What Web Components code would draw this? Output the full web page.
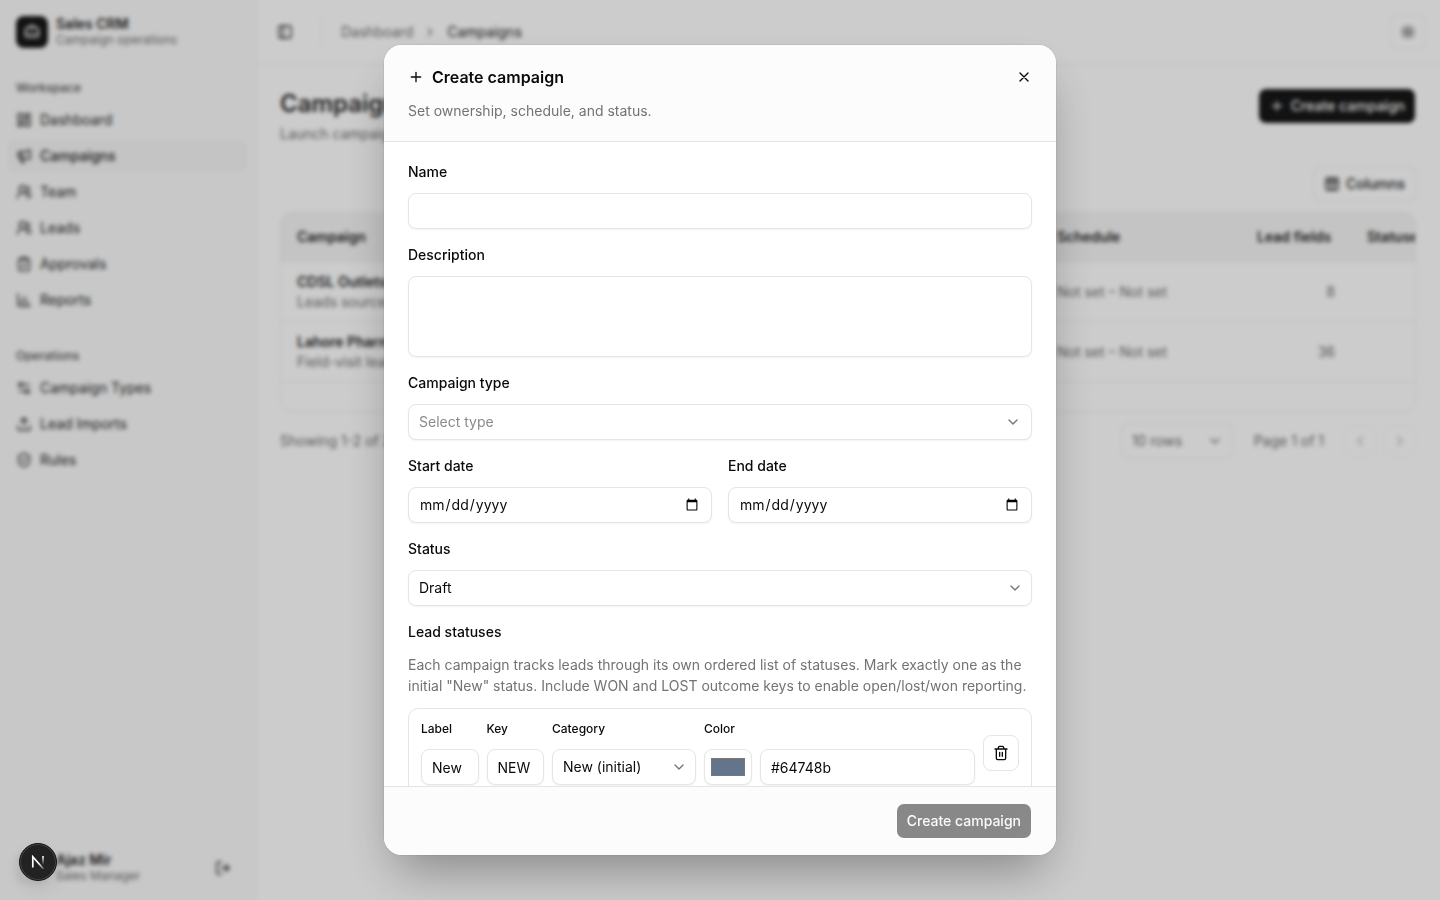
<!DOCTYPE html>
<html lang="en">
<head>
<meta charset="utf-8">
<meta name="viewport" content="width=device-width, initial-scale=1">
<title>Campaigns - Sales CRM</title>
<style>
	html, body { height: 100%; }
	body {
		margin: 0;
		overflow: hidden;
		font: 14px/20px Inter, "Liberation Sans", sans-serif;
		color: #0a0a0a;
		background: #ffffff;
		--muted: #737373;
		--line: #e5e5e5;
		--surface: #fafafa;
		--accent: #f5f5f5;
		--primary: #171717;
	}
	crm-shell { --line: #f0f0f0; color: #262626; }
</style>
</head>
<body>

<crm-shell>
	<crm-sidebar slot="sidebar">
		<crm-nav-group label="Workspace">
			<crm-nav-item icon="dashboard">Dashboard</crm-nav-item>
			<crm-nav-item icon="megaphone" active>Campaigns</crm-nav-item>
			<crm-nav-item icon="users">Team</crm-nav-item>
			<crm-nav-item icon="users">Leads</crm-nav-item>
			<crm-nav-item icon="clipboard">Approvals</crm-nav-item>
			<crm-nav-item icon="chart">Reports</crm-nav-item>
		</crm-nav-group>
		<crm-nav-group label="Operations">
			<crm-nav-item icon="settings">Campaign Types</crm-nav-item>
			<crm-nav-item icon="upload">Lead Imports</crm-nav-item>
			<crm-nav-item icon="shield">Rules</crm-nav-item>
		</crm-nav-group>
	</crm-sidebar>
	<crm-topbar></crm-topbar>
	<crm-campaigns></crm-campaigns>
</crm-shell>

<crm-dialog heading="Create campaign" description="Set ownership, schedule, and status.">
	<crm-field label="Name"></crm-field>
	<crm-field label="Description" type="textarea"></crm-field>
	<crm-field label="Campaign type" type="select" placeholder="Select type"></crm-field>
	<crm-columns>
		<crm-field label="Start date" type="date"></crm-field>
		<crm-field label="End date" type="date"></crm-field>
	</crm-columns>
	<crm-field label="Status" type="select" value="Draft"></crm-field>
	<crm-lead-statuses></crm-lead-statuses>
	<crm-button slot="footer" disabled>Create campaign</crm-button>
</crm-dialog>

<dev-badge></dev-badge>

<script>
// 24x24 stroke icons
const ICONS = {
	plus: '<path d="M5 12h14M12 5v14"/>',
	close: '<path d="M18 6 6 18M6 6l12 12"/>',
	down: '<path d="m6 9 6 6 6-6"/>',
	left: '<path d="m15 18-6-6 6-6"/>',
	right: '<path d="m9 18 6-6-6-6"/>',
	trash: '<path d="M3 6h18M19 6v14a2 2 0 0 1-2 2H7a2 2 0 0 1-2-2V6M8 6V4a2 2 0 0 1 2-2h4a2 2 0 0 1 2 2v2M10 11v6M14 11v6"/>',
	briefcase: '<path d="M12 12h.01M16 6V4a2 2 0 0 0-2-2h-4a2 2 0 0 0-2 2v2M22 13a18.15 18.15 0 0 1-20 0"/><rect width="20" height="14" x="2" y="6" rx="2"/>',
	panel: '<rect width="18" height="18" x="3" y="3" rx="2"/><path d="M9 3v18"/>',
	sun: '<circle cx="12" cy="12" r="4"/><path d="M12 2v2M12 20v2M4.93 4.93l1.41 1.41M17.66 17.66l1.41 1.41M2 12h2M20 12h2M6.34 17.66l-1.41 1.41M19.07 4.93l-1.41 1.41"/>',
	columns: '<rect width="18" height="18" x="3" y="3" rx="2"/><path d="M3 9h18M9 3v18M15 3v18"/>',
	dashboard: '<rect width="7" height="9" x="3" y="3" rx="1"/><rect width="7" height="5" x="14" y="3" rx="1"/><rect width="7" height="9" x="14" y="12" rx="1"/><rect width="7" height="5" x="3" y="16" rx="1"/>',
	megaphone: '<path d="M11 6a13 13 0 0 0 8.4-2.8A1 1 0 0 1 21 4v12a1 1 0 0 1-1.6.8A13 13 0 0 0 11 14H5a2 2 0 0 1-2-2V8a2 2 0 0 1 2-2zM6 14a12 12 0 0 0 2.4 7.2 2 2 0 0 0 3.2-2.4A8 8 0 0 1 10 14M8 6v8"/>',
	users: '<path d="M18 21a8 8 0 0 0-16 0"/><circle cx="10" cy="8" r="5"/><path d="M22 20c0-3.37-2-6.5-4-8a5 5 0 0 0-.45-8.3"/>',
	clipboard: '<rect width="8" height="4" x="8" y="2" rx="1"/><path d="M16 4h2a2 2 0 0 1 2 2v14a2 2 0 0 1-2 2H6a2 2 0 0 1-2-2V6a2 2 0 0 1 2-2h2M9 14l2 2 4-4"/>',
	chart: '<path d="M3 3v16a2 2 0 0 0 2 2h16M18 17v-3M13 17V7M8 17v-5"/>',
	settings: '<path d="M20 7h-9M14 17H5"/><circle cx="17" cy="17" r="3"/><circle cx="7" cy="7" r="3"/>',
	upload: '<path d="M12 3v12M17 8l-5-5-5 5M21 15v4a2 2 0 0 1-2 2H5a2 2 0 0 1-2-2v-4"/>',
	shield: '<path d="M20 13c0 5-3.5 7.5-7.66 8.95a1 1 0 0 1-.67-.01C7.5 20.5 4 18 4 13V6a1 1 0 0 1 1-1c2 0 4.5-1.2 6.24-2.72a1.17 1.17 0 0 1 1.52 0C14.51 3.81 17 5 19 5a1 1 0 0 1 1 1zM9 12l2 2 4-4"/>',
	logout: '<path d="M9 21H5a2 2 0 0 1-2-2V5a2 2 0 0 1 2-2h4M16 17l5-5-5-5M21 12H9"/>'
};

// Base: every element renders once into an open shadow root
class CrmElement extends HTMLElement {
	constructor() {
		super();
		this.attachShadow({ mode: 'open' });
	}

	connectedCallback() {
		this.shadowRoot.innerHTML = this.render();
	}

	attr(name) { return this.getAttribute(name) || ''; }
}

class CrmIcon extends CrmElement {
	render() {
		return `
			<style>
				:host { display: block; flex: none; width: 16px; height: 16px; }
				svg { display: block; width: 100%; height: 100%; }
			</style>
			<svg viewBox="0 0 24 24" fill="none" stroke="currentColor" stroke-width="2" stroke-linecap="round" stroke-linejoin="round" aria-hidden="true">${ICONS[this.attr('name')]}</svg>
		`;
	}
}
customElements.define('crm-icon', CrmIcon);

class CrmButton extends CrmElement {
	render() {
		const icon = this.attr('icon');
		const label = this.attr('label');
		return `
			<style>
				:host { display: block; flex: none; }
				button {
					display: flex;
					align-items: center;
					justify-content: center;
					gap: 6px;
					box-sizing: border-box;
					min-width: 36px;
					height: 36px;
					padding: 0 10px;
					border: 1px solid transparent;
					border-radius: 8px;
					font: inherit;
					font-weight: 500;
					color: #fafafa;
					background: var(--primary);
					background-clip: padding-box;
					cursor: pointer;
				}
				button:disabled { opacity: 0.5; cursor: default; }
				:host([variant="outline"]) button {
					color: inherit;
					background: #ffffff;
					border-color: var(--line);
				}
				:host([variant="ghost"]) button { color: inherit; background: none; }
				:host([label]) button { padding: 0; }
				:host([size="small"]) button { min-width: 32px; height: 32px; }
			</style>
			<button type="button" ${label ? `aria-label="${label}"` : ''} ${this.hasAttribute('disabled') ? 'disabled' : ''}>
				${icon ? `<crm-icon name="${icon}"></crm-icon>` : ''}${label ? '' : '<slot></slot>'}
			</button>
		`;
	}
}
customElements.define('crm-button', CrmButton);

class CrmShell extends CrmElement {
	render() {
		return `
			<style>
				:host { display: grid; grid-template-columns: 256px minmax(0, 1fr); min-height: 100vh; }
				main { min-width: 0; }
			</style>
			<slot name="sidebar"></slot>
			<main><slot></slot></main>
		`;
	}
}
customElements.define('crm-shell', CrmShell);

class CrmSidebar extends CrmElement {
	render() {
		return `
			<style>
				:host {
					display: flex;
					flex-direction: column;
					box-sizing: border-box;
					background: var(--surface);
					border-right: 1px solid var(--line);
				}
				header, footer { display: flex; align-items: center; gap: 8px; padding: 16px; }
				.logo {
					display: grid;
					place-items: center;
					width: 32px;
					height: 32px;
					border-radius: 8px;
					color: #fafafa;
					background: var(--primary);
				}
				.text { flex: 1; line-height: 16px; }
				strong { display: block; font-weight: 600; }
				small { display: block; font-size: 12px; color: var(--muted); }
				nav { flex: 1; }
				.avatar { width: 32px; height: 32px; border-radius: 8px; background: var(--line); }
			</style>
			<header>
				<div class="logo"><crm-icon name="briefcase"></crm-icon></div>
				<div class="text"><strong>Sales CRM</strong><small>Campaign operations</small></div>
			</header>
			<nav><slot></slot></nav>
			<footer>
				<div class="avatar"></div>
				<div class="text"><strong>Ajaz Mir</strong><small>Sales Manager</small></div>
				<crm-button variant="ghost" size="small" icon="logout" label="Log out"></crm-button>
			</footer>
		`;
	}
}
customElements.define('crm-sidebar', CrmSidebar);

class CrmNavGroup extends CrmElement {
	render() {
		return `
			<style>
				:host { display: block; padding: 8px; margin-bottom: 8px; }
				h2 {
					margin: 0;
					padding: 0 8px;
					font-size: 12px;
					line-height: 32px;
					font-weight: 500;
					color: #525252;
				}
				.items { display: flex; flex-direction: column; gap: 4px; }
			</style>
			<h2>${this.attr('label')}</h2>
			<div class="items"><slot></slot></div>
		`;
	}
}
customElements.define('crm-nav-group', CrmNavGroup);

class CrmNavItem extends CrmElement {
	render() {
		return `
			<style>
				:host { display: block; }
				a {
					display: flex;
					align-items: center;
					gap: 8px;
					height: 32px;
					padding: 0 8px;
					border-radius: 8px;
					color: inherit;
					text-decoration: none;
				}
				:host([active]) a { font-weight: 500; background: var(--accent); }
			</style>
			<a href="#"><crm-icon name="${this.attr('icon')}"></crm-icon><slot></slot></a>
		`;
	}
}
customElements.define('crm-nav-item', CrmNavItem);

class CrmTopbar extends CrmElement {
	render() {
		return `
			<style>
				:host {
					display: flex;
					align-items: center;
					box-sizing: border-box;
					height: 65px;
					padding: 0 14px 0 11px;
					border-bottom: 1px solid var(--line);
				}
				hr { width: 1px; height: 32px; margin: 0 19px 0 18px; border: 0; background: var(--line); }
				nav { display: flex; align-items: center; gap: 10px; flex: 1; }
				nav crm-icon { width: 14px; height: 14px; color: var(--muted); }
				a { color: var(--muted); text-decoration: none; }
				b { font-weight: 400; }
			</style>
			<crm-button variant="ghost" icon="panel" label="Toggle sidebar"></crm-button>
			<hr>
			<nav aria-label="Breadcrumb">
				<a href="#">Dashboard</a>
				<crm-icon name="right"></crm-icon>
				<b>Campaigns</b>
			</nav>
			<crm-button variant="outline" icon="sun" label="Toggle theme"></crm-button>
		`;
	}
}
customElements.define('crm-topbar', CrmTopbar);

class CrmCampaigns extends CrmElement {
	constructor() {
		super();
		this._rows = [
			{ name: 'CDSL Outlets', note: 'Leads sourced', schedule: 'Not set – Not set', fields: 8 },
			{ name: 'Lahore Pharmacies', note: 'Field-visit leads', schedule: 'Not set – Not set', fields: 36 }
		];
	}

	render() {
		return `
			<style>
				:host { display: block; padding: 23px 24px; }
				.head { display: flex; align-items: flex-start; justify-content: space-between; }
				h1 { margin: 0; font-size: 24px; line-height: 32px; font-weight: 600; }
				p { margin: 4px 0 0; color: var(--muted); }
				.tools { display: flex; justify-content: flex-end; margin: 22px 0 10px; }
				.table {
					overflow: hidden;
					padding-bottom: 29px;
					border: 1px solid var(--line);
					border-radius: 12px;
				}
				table { width: 1280px; table-layout: fixed; border-collapse: collapse; }
				th, td { padding: 0 16px; text-align: left; border-bottom: 1px solid var(--line); }
				th { height: 48px; font-weight: 600; background: var(--accent); }
				td { height: 59px; color: var(--muted); }
				td strong { display: block; font-weight: 600; color: #262626; }
				td.num { text-align: right; }
				.foot { display: flex; align-items: center; margin-top: 11px; color: var(--muted); }
				.foot .count { flex: 1; }
				.foot label { display: grid; align-items: center; margin-right: 21px; }
				.foot select {
					grid-area: 1 / 1;
					width: 112px;
					height: 36px;
					padding: 0 10px;
					border: 1px solid var(--line);
					border-radius: 8px;
					font: inherit;
					color: inherit;
					background: #ffffff;
					appearance: none;
				}
				.foot label crm-icon { grid-area: 1 / 1; justify-self: end; margin-right: 10px; pointer-events: none; }
				.foot .page { margin-right: 20px; }
				.foot crm-button + crm-button { margin-left: 8px; }
			</style>
			<div class="head">
				<div>
					<h1>Campaigns</h1>
					<p>Launch campaigns</p>
				</div>
				<crm-button icon="plus">Create campaign</crm-button>
			</div>
			<div class="tools"><crm-button variant="outline" icon="columns">Columns</crm-button></div>
			<div class="table">
				<table>
					<colgroup><col style="width: 760px"><col style="width: 200px"><col style="width: 110px"><col></colgroup>
					<thead>
						<tr><th>Campaign</th><th>Schedule</th><th>Lead fields</th><th>Statuses</th></tr>
					</thead>
					<tbody>
						${this._rows.map(r => `
							<tr>
								<td><strong>${r.name}</strong>${r.note}</td>
								<td>${r.schedule}</td>
								<td class="num">${r.fields}</td>
								<td></td>
							</tr>
						`).join('')}
					</tbody>
				</table>
			</div>
			<div class="foot">
				<span class="count">Showing 1-2 of 2</span>
				<label>
					<select aria-label="Rows per page"><option>10 rows</option></select>
					<crm-icon name="down"></crm-icon>
				</label>
				<span class="page">Page 1 of 1</span>
				<crm-button variant="outline" size="small" icon="left" label="Previous page" disabled></crm-button>
				<crm-button variant="outline" size="small" icon="right" label="Next page" disabled></crm-button>
			</div>
		`;
	}
}
customElements.define('crm-campaigns', CrmCampaigns);

class CrmDialog extends CrmElement {
	render() {
		return `
			<style>
				:host {
					position: fixed;
					inset: 0;
					display: grid;
					place-items: center;
					background: rgba(0, 0, 0, 0.2);
					backdrop-filter: blur(2px);
				}
				section {
					display: flex;
					flex-direction: column;
					width: calc(100% - 32px);
					max-width: 672px;
					max-height: 90vh;
					overflow: hidden;
					border-radius: 18px;
					background: #ffffff;
					box-shadow: 0 0 0 1px rgba(0, 0, 0, 0.05), 0 25px 50px -12px rgba(0, 0, 0, 0.35);
				}
				header { padding: 20px 24px; border-bottom: 1px solid var(--line); background: #fcfcfc; }
				.title { display: flex; align-items: center; gap: 8px; height: 24px; }
				h2 { flex: 1; margin: 0; font-size: 16px; line-height: 24px; font-weight: 600; }
				.title crm-button { margin-right: -8px; }
				p { margin: 12px 0 0; color: var(--muted); }
				.body {
					display: flex;
					flex-direction: column;
					gap: 16px;
					min-height: 0;
					padding: 20px 24px;
					overflow-y: auto;
					scrollbar-width: none;
				}
				footer {
					display: flex;
					justify-content: flex-end;
					padding: 16px 24px;
					border-top: 1px solid var(--line);
					background: #fcfcfc;
				}
			</style>
			<section role="dialog" aria-modal="true" aria-labelledby="heading">
				<header>
					<div class="title">
						<crm-icon name="plus"></crm-icon>
						<h2 id="heading">${this.attr('heading')}</h2>
						<crm-button variant="ghost" size="small" icon="close" label="Close"></crm-button>
					</div>
					<p>${this.attr('description')}</p>
				</header>
				<div class="body"><slot></slot></div>
				<footer><slot name="footer"></slot></footer>
			</section>
		`;
	}
}
customElements.define('crm-dialog', CrmDialog);

class CrmColumns extends CrmElement {
	render() {
		return `
			<style>
				:host { display: grid; grid-template-columns: 1fr 1fr; gap: 16px; }
			</style>
			<slot></slot>
		`;
	}
}
customElements.define('crm-columns', CrmColumns);

/**
	<crm-field label="Name"></crm-field>
	type: text (default), textarea, date, select, color
	size="small" for the compact label
*/
class CrmField extends CrmElement {
	control() {
		const value = this.attr('value');
		const placeholder = this.attr('placeholder');
		switch (this.attr('type')) {
			case 'textarea':
				return `<textarea id="control">${value}</textarea>`;
			case 'date':
				return `<input id="control" type="date">`;
			case 'select':
				return `
					<div class="select">
						<select id="control" class="${value ? '' : 'empty'}">
							<option>${value || placeholder}</option>
						</select>
						<crm-icon name="down"></crm-icon>
					</div>
				`;
			case 'color':
				return `
					<div class="color">
						<input id="control" type="color" value="${value}">
						<input type="text" aria-label="Color hex value" value="${value}">
					</div>
				`;
			default:
				return `<input id="control" type="text" value="${value}">`;
		}
	}

	render() {
		return `
			<style>
				:host { display: flex; flex-direction: column; gap: 12px; min-width: 0; }
				label { line-height: 19px; font-weight: 500; }
				:host([size="small"]) label { font-size: 12px; line-height: 16px; }
				input, textarea, select {
					box-sizing: border-box;
					width: 100%;
					min-width: 0;
					height: 36px;
					margin: 0;
					padding: 0 10px;
					border: 1px solid var(--line);
					border-radius: 8px;
					outline: none;
					font: inherit;
					color: inherit;
					background: #ffffff;
					box-shadow: 0 1px 2px rgba(0, 0, 0, 0.05);
				}
				input:focus, textarea:focus, select:focus { border-color: #a3a3a3; }
				textarea { height: 81px; padding: 8px 10px; resize: none; }
				select { grid-area: 1 / 1; appearance: none; }
				select.empty { color: #8a8a8a; }
				.select { display: grid; align-items: center; }
				.select crm-icon { grid-area: 1 / 1; justify-self: end; margin-right: 9px; color: var(--muted); pointer-events: none; }
				.select .empty + crm-icon { margin-right: 11px; }
				.color { display: flex; gap: 8px; }
				input[type="color"] { flex: none; width: 48px; padding: 4px; }
			</style>
			<label for="control">${this.attr('label')}</label>
			${this.control()}
		`;
	}
}
customElements.define('crm-field', CrmField);

class CrmLeadStatuses extends CrmElement {
	render() {
		return `
			<style>
				:host { display: flex; flex-direction: column; gap: 12px; }
				h3 { margin: 0; font-size: 14px; line-height: 20px; font-weight: 500; }
				p { margin: 0; line-height: 21px; color: var(--muted); }
				.row {
					display: grid;
					grid-template-columns: minmax(0, 1fr) minmax(0, 1fr) 144px minmax(0, 271px) 36px;
					align-items: center;
					gap: 8px;
					padding: 12px;
					border: 1px solid var(--line);
					border-radius: 10px;
				}
			</style>
			<h3>Lead statuses</h3>
			<p>Each campaign tracks leads through its own ordered list of statuses. Mark exactly one as the initial "New" status. Include WON and LOST outcome keys to enable open/lost/won reporting.</p>
			<div class="row">
				<crm-field size="small" label="Label" value="New"></crm-field>
				<crm-field size="small" label="Key" value="NEW"></crm-field>
				<crm-field size="small" label="Category" type="select" value="New (initial)"></crm-field>
				<crm-field size="small" label="Color" type="color" value="#64748b"></crm-field>
				<crm-button variant="outline" icon="trash" label="Remove status"></crm-button>
			</div>
		`;
	}
}
customElements.define('crm-lead-statuses', CrmLeadStatuses);

class DevBadge extends CrmElement {
	render() {
		return `
			<style>
				:host { position: fixed; left: 19px; bottom: 19px; }
				button {
					display: grid;
					place-items: center;
					width: 38px;
					height: 38px;
					padding: 0;
					border: 1px solid #171717;
					border-radius: 50%;
					background: #222222;
					box-shadow: inset 0 0 0 1px #444444, 0 8px 16px rgba(0, 0, 0, 0.08);
				}
				svg { display: block; }
			</style>
			<button type="button" aria-label="Open dev tools">
				<svg width="14" height="14" viewBox="0 0 14 14" fill="none" stroke-width="1.7" aria-hidden="true">
					<defs>
						<linearGradient id="a" gradientUnits="userSpaceOnUse" x1="8" y1="8" x2="13" y2="14">
							<stop stop-color="#fff"/><stop offset="1" stop-color="#fff" stop-opacity="0.2"/>
						</linearGradient>
						<linearGradient id="b" gradientUnits="userSpaceOnUse" x1="12" y1="1" x2="12" y2="10">
							<stop stop-color="#fff"/><stop offset="1" stop-color="#fff" stop-opacity="0"/>
						</linearGradient>
					</defs>
					<path d="M1.8 12.5V1.8L12.6 14" stroke="url(#a)"/>
					<path d="M12 1v9" stroke="url(#b)"/>
				</svg>
			</button>
		`;
	}
}
customElements.define('dev-badge', DevBadge);
</script>
</body>
</html>
